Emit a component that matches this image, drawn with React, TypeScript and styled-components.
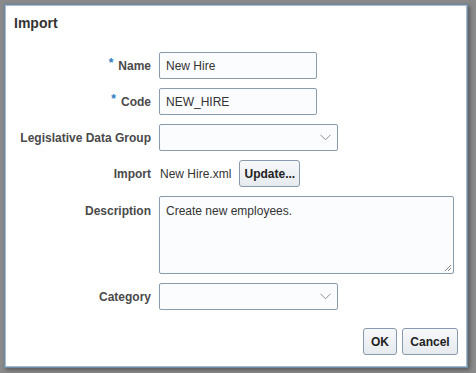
import React from "react";
import styled, { createGlobalStyle } from "styled-components";

const Global = createGlobalStyle`
  html, body { margin: 0; padding: 0; }
  body {
    background: #8a8a8a;
    font-family: "Liberation Sans", Arial, sans-serif;
    width: 476px;
    height: 373px;
    overflow: hidden;
  }
`;

const Stage = styled.div`
  padding: 4px 0 0 4px;
  display: flex;
`;

const Dialog = styled.div`
  box-sizing: border-box;
  width: 464px;
  height: 364px;
  background: #ffffff;
  border: 1px solid #6d8ca8;
  box-shadow: 0 0 0 1px #a9b9c7 inset, 2px 2px 4px rgba(0,0,0,0.35);
  display: flex;
  flex-direction: column;
  padding: 0 9px 12px 0;
`;

const Title = styled.h1`
  margin: 0;
  padding: 10px 0 0 9px;
  height: 38px;
  box-sizing: border-box;
  font-size: 14px;
  font-weight: bold;
  color: #333333;
`;

const Form = styled.div`
  display: grid;
  grid-template-columns: 146px 1fr;
  column-gap: 8px;
  row-gap: 9px;
  margin-top: 9px;
  flex: 1;
  align-content: start;
`;

const Label = styled.div<{ $top?: boolean }>`
  font-size: 12px;
  font-weight: bold;
  color: #4a4a4a;
  text-align: right;
  display: flex;
  justify-content: flex-end;
  align-items: ${p => (p.$top ? "flex-start" : "center")};
  padding-top: ${p => (p.$top ? "8px" : "0")};
  height: ${p => (p.$top ? "auto" : "27px")};
  white-space: nowrap;
`;

const Req = styled.span`
  color: #2f7bc2;
  font-size: 12px;
  font-weight: bold;
  margin-right: 5px;
  position: relative;
  top: -3px;
`;

const Field = styled.div`
  display: flex;
  align-items: center;
  gap: 8px;
  min-height: 27px;
`;

const Input = styled.div<{ $w: number }>`
  box-sizing: border-box;
  width: ${p => p.$w}px;
  height: 27px;
  border: 1px solid #8a9bab;
  border-radius: 2px;
  background: #fbfcfe;
  font-size: 12px;
  color: #333333;
  padding: 0 6px;
  display: flex;
  align-items: center;
  justify-content: space-between;
`;

const TextArea = styled.div`
  box-sizing: border-box;
  width: 295px;
  height: 78px;
  border: 1px solid #8a9bab;
  border-radius: 2px;
  background: #fbfcfe;
  font-size: 12px;
  color: #333333;
  padding: 7px 6px;
  position: relative;
`;

const Grip = styled.svg`
  position: absolute;
  right: 1px;
  bottom: 1px;
`;

const Plain = styled.span`
  font-size: 12px;
  color: #333333;
  margin-left: 1px;
`;

const Button = styled.button<{ $w: number }>`
  box-sizing: border-box;
  width: ${p => p.$w}px;
  height: 27px;
  border: 1px solid #8799aa;
  border-radius: 3px;
  background: linear-gradient(#f7f8fa, #e6eaee);
  font-family: "Liberation Sans", Arial, sans-serif;
  font-size: 12px;
  font-weight: bold;
  color: #222222;
  padding: 0;
  cursor: pointer;
`;

const Footer = styled.div`
  display: flex;
  justify-content: flex-end;
  gap: 5px;
`;

const Chevron = () => (
  <svg width="11" height="7" viewBox="0 0 11 7">
    <path d="M0.5 0.8 L5.5 5.8 L10.5 0.8" fill="none" stroke="#8a8f96" strokeWidth="1" />
  </svg>
);

export default function App() {
  return (
    <>
      <Global />
      <Stage>
        <Dialog>
          <Title>Import</Title>
          <Form>
            <Label><Req>*</Req>Name</Label>
            <Field><Input $w={158}>New Hire</Input></Field>

            <Label><Req>*</Req>Code</Label>
            <Field><Input $w={158}>NEW_HIRE</Input></Field>

            <Label>Legislative Data Group</Label>
            <Field><Input $w={179}><span /><Chevron /></Input></Field>

            <Label>Import</Label>
            <Field>
              <Plain>New Hire.xml</Plain>
              <Button $w={61}>Update...</Button>
            </Field>

            <Label $top>Description</Label>
            <Field>
              <TextArea>
                Create new employees.
                <Grip width="9" height="9" viewBox="0 0 9 9">
                  <path d="M8 2 L2 8 M8 5 L5 8" stroke="#8a8a8a" strokeWidth="1" />
                </Grip>
              </TextArea>
            </Field>

            <Label>Category</Label>
            <Field><Input $w={179}><span /><Chevron /></Input></Field>
          </Form>
          <Footer>
            <Button $w={34}>OK</Button>
            <Button $w={56}>Cancel</Button>
          </Footer>
        </Dialog>
      </Stage>
    </>
  );
}
